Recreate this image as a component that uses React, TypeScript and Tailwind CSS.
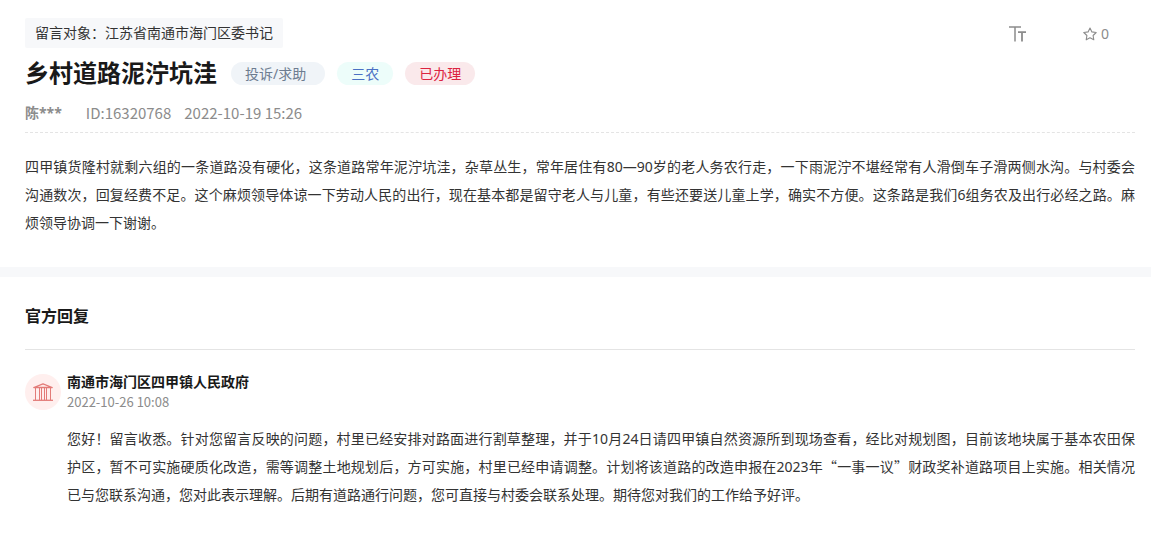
import clsx from "clsx";

const tags = [
	{ label: "投诉/求助", className: "bg-[#f0f4f8] pr-[19px] text-[#6d7c90]" },
	{ label: "三农", className: "bg-[#edfdfa] text-[#4a70c4]" },
	{ label: "已办理", className: "bg-[#fae9eb] text-[#dc2340]" },
];

function FontSizeIcon() {
	return (
		<svg width="18" height="16" viewBox="0 0 18 16" fill="none" stroke="currentColor" strokeWidth="1.5" aria-hidden>
			<path d="M0 1h12M6 1v14.5" />
			<path d="M9 6.2h8M13 6v9.5" strokeWidth="1.8" />
		</svg>
	);
}

function StarIcon() {
	return (
		<svg width="14" height="14" viewBox="0 0 14 14" fill="none" stroke="currentColor" strokeWidth="1.1" strokeLinejoin="round" aria-hidden>
			<path d="M7 1l1.9 3.9 4.3.6-3.1 3 .7 4.3L7 10.8l-3.8 2 .7-4.3-3.1-3 4.3-.6z" />
		</svg>
	);
}

function GovernmentIcon() {
	return (
		<svg width="20" height="18" viewBox="0 0 20 18" fill="none" stroke="currentColor" strokeLinejoin="round" aria-hidden>
			<path d="M.8 4.5h18.4L10 .8z" strokeWidth="1.3" />
			<path d="M2.5 5v12M17.5 5v12M6.5 5v12M8.5 5v12M11.5 5v12M13.5 5v12" />
			<path d="M0 17.3h20" strokeWidth="1.3" />
		</svg>
	);
}

function MessageSection() {
	return (
		<section className="pt-[18px] pr-4 pb-[30px] pl-[25px]">
			<div className="flex items-start justify-between">
				<p className="rounded-xs bg-[#f7f8fa] px-2.5 text-sm leading-[30px]">留言对象：江苏省南通市海门区委书记</p>
				<div className="flex items-center gap-14 pt-1 pr-[26px] text-[#8c8c8c]">
					<button type="button" aria-label="字号" className="cursor-pointer">
						<FontSizeIcon />
					</button>
					<button type="button" aria-label="收藏" className="flex cursor-pointer items-center gap-1 text-sm leading-6">
						<StarIcon />
						<span>0</span>
					</button>
				</div>
			</div>

			<div className="mt-1 flex flex-wrap items-center gap-3.5">
				<h1 className="text-2xl leading-[42px] font-bold text-[#191919]">乡村道路泥泞坑洼</h1>
				<ul className="flex gap-3">
					{tags.map((tag) => (
						<li key={tag.label} className={clsx("rounded-full px-3.5 text-sm leading-[23px]", tag.className)}>
							{tag.label}
						</li>
					))}
				</ul>
			</div>

			<div className="flex items-center border-b border-dashed border-[#e4e4e4] py-1.5 text-[15px] leading-[26px] text-[#8c8c8c]">
				<span className="mr-6 text-sm leading-[26px] font-bold">陈***</span>
				<span className="mr-[13px] font-['Noto_Sans_CJK_SC',sans-serif]">ID:16320768</span>
				<time dateTime="2022-10-19T15:26" className="font-['Noto_Sans_CJK_SC',sans-serif]">
					2022-10-19 15:26
				</time>
			</div>

			<p className="pt-5 text-justify text-sm leading-7">
				四甲镇货隆村就剩六组的一条道路没有硬化，这条道路常年泥泞坑洼，杂草丛生，常年居住有80—90岁的老人务农行走，一下雨泥泞不堪经常有人滑倒车子滑两侧水沟。与村委会沟通数次，回复经费不足。这个麻烦领导体谅一下劳动人民的出行，现在基本都是留守老人与儿童，有些还要送儿童上学，确实不方便。这条路是我们6组务农及出行必经之路。麻烦领导协调一下谢谢。
			</p>
		</section>
	);
}

function ReplySection() {
	return (
		<section className="pr-4 pb-6 pl-[25px]">
			<h2 className="border-b border-[#e4e4e4] pt-[23px] pb-[17px] text-base leading-8 font-bold text-[#191919]">官方回复</h2>

			<article className="pt-[22px]">
				<header className="flex items-center gap-1.5">
					<span className="flex size-9 shrink-0 items-center justify-center rounded-full bg-[#ffefee] text-[#e37b78]">
						<GovernmentIcon />
					</span>
					<div>
						<h3 className="text-sm leading-5 font-bold text-[#191919]">南通市海门区四甲镇人民政府</h3>
						<time
							dateTime="2022-10-26T10:08"
							className="block font-['Noto_Sans_CJK_SC',sans-serif] text-[13px] leading-5 text-[#8c8c8c]"
						>
							2022-10-26 10:08
						</time>
					</div>
				</header>
				<p className="pt-[13px] pl-[42px] text-justify text-sm leading-7">
					您好！留言收悉。针对您留言反映的问题，村里已经安排对路面进行割草整理，并于10月24日请四甲镇自然资源所到现场查看，经比对规划图，目前该地块属于基本农田保护区，暂不可实施硬质化改造，需等调整土地规划后，方可实施，村里已经申请调整。计划将该道路的改造申报在2023年
					<span className="font-['Noto_Sans_CJK_SC',sans-serif] leading-none">“一事一议”</span>
					财政奖补道路项目上实施。相关情况已与您联系沟通，您对此表示理解。后期有道路通行问题，您可直接与村委会联系处理。期待您对我们的工作给予好评。
				</p>
			</article>
		</section>
	);
}

export default function App() {
	return (
		<main lang="zh-CN" className="bg-white font-['Noto_Sans','Noto_Sans_CJK_SC',sans-serif] text-[#333333]">
			<MessageSection />
			<div className="h-2.5 bg-[#f7f8fa]" />
			<ReplySection />
		</main>
	);
}
